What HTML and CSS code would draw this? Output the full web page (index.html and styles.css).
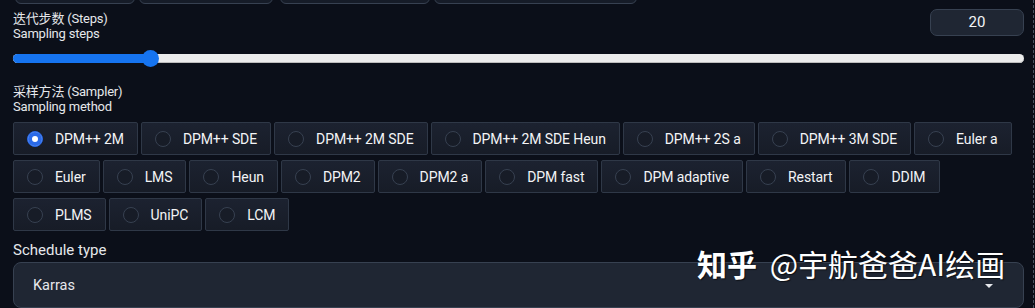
FILE: index.html
```html
<!DOCTYPE html>
<html lang="zh-CN">
<head>
    <meta charset="UTF-8">
    <title>txt2img settings</title>
    <link rel="stylesheet" href="styles.css">
</head>
<body>
    <div class="panel">
        <!-- 上一行按钮，只露出底边 -->
        <div class="toolbar">
            <span class="tool tool-a"></span>
            <span class="tool tool-b"></span>
            <span class="tool tool-c"></span>
            <span class="tool tool-d"></span>
        </div>

        <!-- 迭代步数 -->
        <div class="steps-head">
            <div class="label">
                <div>迭代步数 (Steps)</div>
                <div>Sampling steps</div>
            </div>
            <div class="num">20</div>
        </div>
        <div class="slider">
            <div class="fill" style="width: 137px"></div>
            <span class="thumb" style="left: 129px"></span>
        </div>

        <!-- 采样方法 -->
        <div class="label sampler-label">
            <div>采样方法 (Sampler)</div>
            <div>Sampling method</div>
        </div>
        <div class="radios">
            <div class="radio-row">
                <label class="chip on"><i></i>DPM++ 2M</label>
                <label class="chip"><i></i>DPM++ SDE</label>
                <label class="chip"><i></i>DPM++ 2M SDE</label>
                <label class="chip"><i></i>DPM++ 2M SDE Heun</label>
                <label class="chip"><i></i>DPM++ 2S a</label>
                <label class="chip"><i></i>DPM++ 3M SDE</label>
                <label class="chip"><i></i>Euler a</label>
            </div>
            <div class="radio-row">
                <label class="chip"><i></i>Euler</label>
                <label class="chip"><i></i>LMS</label>
                <label class="chip"><i></i>Heun</label>
                <label class="chip"><i></i>DPM2</label>
                <label class="chip"><i></i>DPM2 a</label>
                <label class="chip"><i></i>DPM fast</label>
                <label class="chip"><i></i>DPM adaptive</label>
                <label class="chip"><i></i>Restart</label>
                <label class="chip"><i></i>DDIM</label>
            </div>
            <div class="radio-row">
                <label class="chip"><i></i>PLMS</label>
                <label class="chip"><i></i>UniPC</label>
                <label class="chip"><i></i>LCM</label>
            </div>
        </div>

        <!-- 调度类型 -->
        <div class="sched-label">Schedule type</div>
        <div class="select">
            <span>Karras</span>
            <svg width="10" height="6" viewBox="0 0 10 6"><path d="M1 1h8L5 5z" fill="#e5e7eb"/></svg>
        </div>

        <div class="mark"><b>知乎</b> @宇航爸爸AI绘画</div>
    </div>
</body>
</html>
```

FILE: styles.css
```css
* {
    margin: 0;
    padding: 0;
    box-sizing: border-box;
}
body {
    background: #0b0f19;
    color: #e5e7eb;
    font-family: "Roboto", "Noto Sans CJK SC", sans-serif;
    overflow: hidden;
}
.panel {
    display: flow-root;
    position: relative;
    width: 1034px;
    height: 308px;
    padding: 0 9px 0 13px;
    border-right: 1px dashed #4b5563;
}
.toolbar {
    display: flex;
    gap: 4px;
    height: 30px;
    margin-top: -26px;
}
.tool {
    display: block;
    height: 30px;
    border: 1px solid #374151;
    border-radius: 6px;
    background: #161c28;
}
.tool-a { margin-left: 2px; width: 120px; }
.tool-b { width: 134px; }
.tool-c { margin-left: 3px; width: 150px; }
.tool-d { width: 203px; }

.label {
    font-size: 13px;
    line-height: 15px;
    letter-spacing: -0.2px;
    color: #e5e7eb;
}
.steps-head {
    display: flex;
    justify-content: space-between;
    align-items: flex-start;
    margin-top: 5px;
}
.steps-head .label {
    padding-top: 2px;
}
.num {
    width: 94px;
    height: 27px;
    border: 1px solid #374151;
    border-radius: 7px;
    background: #1f2633;
    font-size: 15px;
    line-height: 25px;
    text-align: center;
    color: #f3f4f6;
}
.slider {
    position: relative;
    height: 9px;
    margin-top: 13px;
    border-radius: 5px;
    background: #ececec;
    box-shadow: inset 0 -1px 0 #bdbdbd;
}
.slider .fill {
    height: 9px;
    border-radius: 5px 0 0 5px;
    background: #1674f0;
}
.slider .thumb {
    position: absolute;
    top: -4px;
    width: 17px;
    height: 17px;
    border-radius: 50%;
    background: #1674f0;
}
.sampler-label {
    margin-top: 21px;
}
.radios {
    display: flex;
    flex-direction: column;
    gap: 5px;
    margin-top: 8px;
}
.radio-row {
    display: flex;
    gap: 3px;
}
.chip {
    display: flex;
    align-items: center;
    height: 33px;
    padding: 0 13px;
    border: 1px solid #2f3847;
    border-radius: 2px;
    background: linear-gradient(to bottom, #1c2230, #171c27);
    font-size: 14px;
    letter-spacing: -0.1px;
    color: #f3f4f6;
}
.chip i {
    display: block;
    width: 16px;
    height: 16px;
    margin-right: 12px;
    border: 1px solid #374151;
    border-radius: 50%;
    background: #171c27;
}
.chip.on i {
    border-color: #2a6ae8;
    background: #2a6ae8;
    box-shadow: inset 0 0 0 4px #2a6ae8, inset 0 0 0 8px #fff;
}
.sched-label {
    margin-top: 10px;
    font-size: 15px;
    line-height: 18px;
}
.select {
    display: flex;
    justify-content: space-between;
    align-items: center;
    height: 46px;
    margin-top: 3px;
    padding: 0 29px 0 19px;
    border: 1px solid #374151;
    border-radius: 8px;
    background: #1f2633;
    font-size: 14.5px;
}
.select svg {
    margin-top: 2px;
}
.mark {
    position: absolute;
    left: 697px;
    top: 245px;
    font-family: "Noto Sans CJK SC", sans-serif;
    font-size: 30px;
    line-height: 36px;
    color: #fff;
    text-shadow: 1px 1px 1px rgba(0, 0, 0, 0.6);
}
.mark b {
    margin-right: 6px;
}
```
